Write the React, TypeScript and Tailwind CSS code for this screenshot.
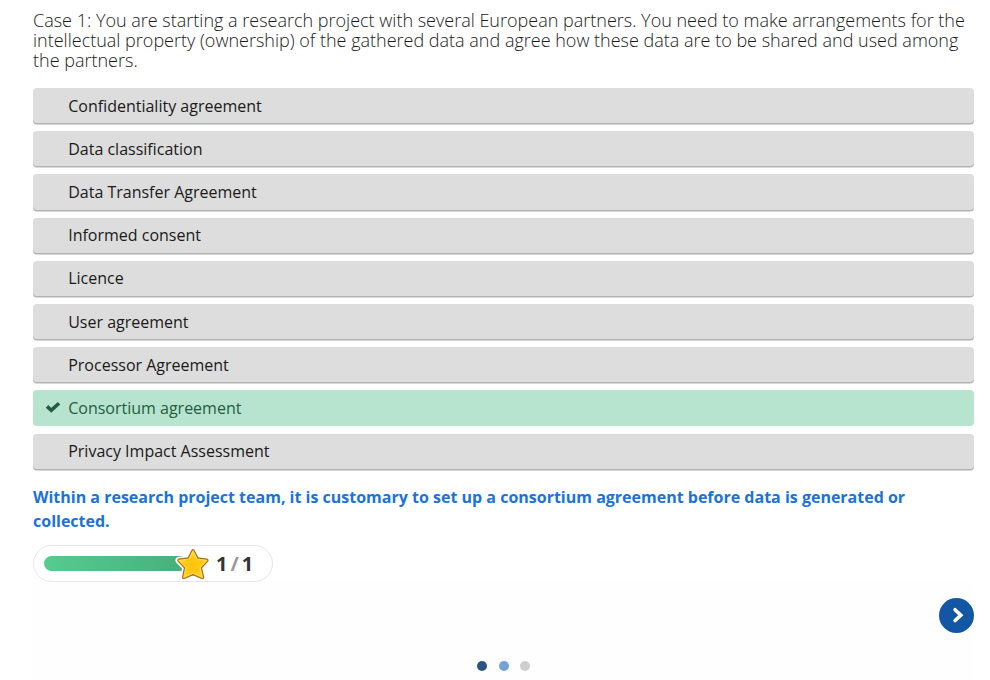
const answers = [
  'Confidentiality agreement',
  'Data classification',
  'Data Transfer Agreement',
  'Informed consent',
  'Licence',
  'User agreement',
  'Processor Agreement',
  'Consortium agreement',
  'Privacy Impact Assessment',
];
const correct = 7;

function Answer({ text, chosen }: { text: string; chosen: boolean }) {
  return (
    <li
      className={
        'flex h-[35.2px] items-center rounded-[4px] pt-[1.4px] text-[16px] leading-[19.2px] ' +
        (chosen
          ? 'bg-[#b6e4ce] text-[#255c41]'
          : 'bg-[#dddddd] text-[#1a1a1a] shadow-[0_1.6px_0_rgba(0,0,0,0.3)]')
      }
    >
      <span className="flex w-[35.2px] shrink-0 justify-center pl-[4px]">
        {chosen && (
          <svg className="-mt-[4px] h-[12px] w-[16px]" viewBox="0 0 16 12" fill="none">
            <path d="M2 5.4 L6.3 9.4 L14 2.2" stroke="#255c41" strokeWidth="3.6" strokeLinejoin="miter" />
          </svg>
        )}
      </span>
      <span>{text}</span>
    </li>
  );
}

function Star() {
  return (
    <svg className="absolute left-[140px] top-[1px] h-[34px] w-[36px]" viewBox="0 0 36 34">
      <defs>
        <radialGradient id="gold" cx="50%" cy="55%" r="55%">
          <stop offset="0" stopColor="#ffc20c" />
          <stop offset="0.6" stopColor="#ffc915" />
          <stop offset="1" stopColor="#ffdf4a" />
        </radialGradient>
      </defs>
      <g strokeLinejoin="round">
        <path
          d="M19 4 L23.1 12 L32.8 13.3 L26.2 20.4 L28.4 30.4 L19 26.3 L9.8 30.4 L11.8 20.4 L5 13.3 L14.9 12 Z"
          fill="#fff"
          stroke="#fff"
          strokeWidth="7"
        />
        <path
          d="M19 4 L23.1 12 L32.8 13.3 L26.2 20.4 L28.4 30.4 L19 26.3 L9.8 30.4 L11.8 20.4 L5 13.3 L14.9 12 Z"
          fill="#a86c17"
          stroke="#a86c17"
          strokeWidth="3.6"
        />
        <path
          d="M19 4 L23.1 12 L32.8 13.3 L26.2 20.4 L28.4 30.4 L19 26.3 L9.8 30.4 L11.8 20.4 L5 13.3 L14.9 12 Z"
          fill="url(#gold)"
          stroke="#ffdc46"
          strokeWidth="1.2"
        />
      </g>
    </svg>
  );
}

export default function App() {
  return (
    <main className="flex h-[680px] w-[990px] flex-col overflow-hidden bg-white pl-[33px] pr-[16px] pt-[10px] font-['Open_Sans',sans-serif]">
      <p className="text-[18px] font-light leading-[20px] whitespace-nowrap text-[#1a1a1a]">
        Case 1: You are starting a research project with several European partners. You need to make arrangements for the
        <br />
        intellectual property (ownership) of the gathered data and agree how these data are to be shared and used among
        <br />
        the partners.
      </p>
      <ul className="mt-[18px] flex flex-col gap-2">
        {answers.map((text, i) => (
          <Answer key={text} text={text} chosen={i === correct} />
        ))}
      </ul>
      <p className="mt-[16px] text-[16px] font-bold leading-[24px] text-[#1a73d9]">
        Within a research project team, it is customary to set up a consortium agreement before data is generated or
        <br />
        collected.
      </p>
      <div className="relative mt-[12px] flex h-[37px] w-[240px] shrink-0 items-center rounded-full border border-[#e6e6e6] bg-white pl-[10px]">
        <div className="h-[15px] w-[150px] shrink-0 rounded-full bg-linear-to-r from-[#55cc90] to-[#46ae7b]" />
        <Star />
        <div className="ml-[22px] flex pt-[1.5px] text-[20px] font-bold leading-none text-[#333333]">
          <span>1</span>
          <span className="mx-[3px] text-[#999999]">/</span>
          <span>1</span>
        </div>
      </div>
      <div className="flex flex-1 flex-col bg-[#fefefe]">
        <button className="mt-[16px] flex size-[35px] items-center justify-center self-end rounded-full bg-[#1356a4]">
          <svg className="size-[35px]" viewBox="0 0 35 35" fill="none">
            <path d="M16.1 11.7 L21.8 17.2 L16.1 22.5" stroke="#fff" strokeWidth="3.6" strokeLinecap="round" />
          </svg>
        </button>
        <nav className="mt-[28px] flex gap-[11.5px] pl-[444px]">
          <span className="size-[10px] rounded-full bg-[#285585]" />
          <span className="size-[10px] rounded-full bg-[#75a2d4]" />
          <span className="size-[10px] rounded-full bg-[#cecece]" />
        </nav>
      </div>
    </main>
  );
}
